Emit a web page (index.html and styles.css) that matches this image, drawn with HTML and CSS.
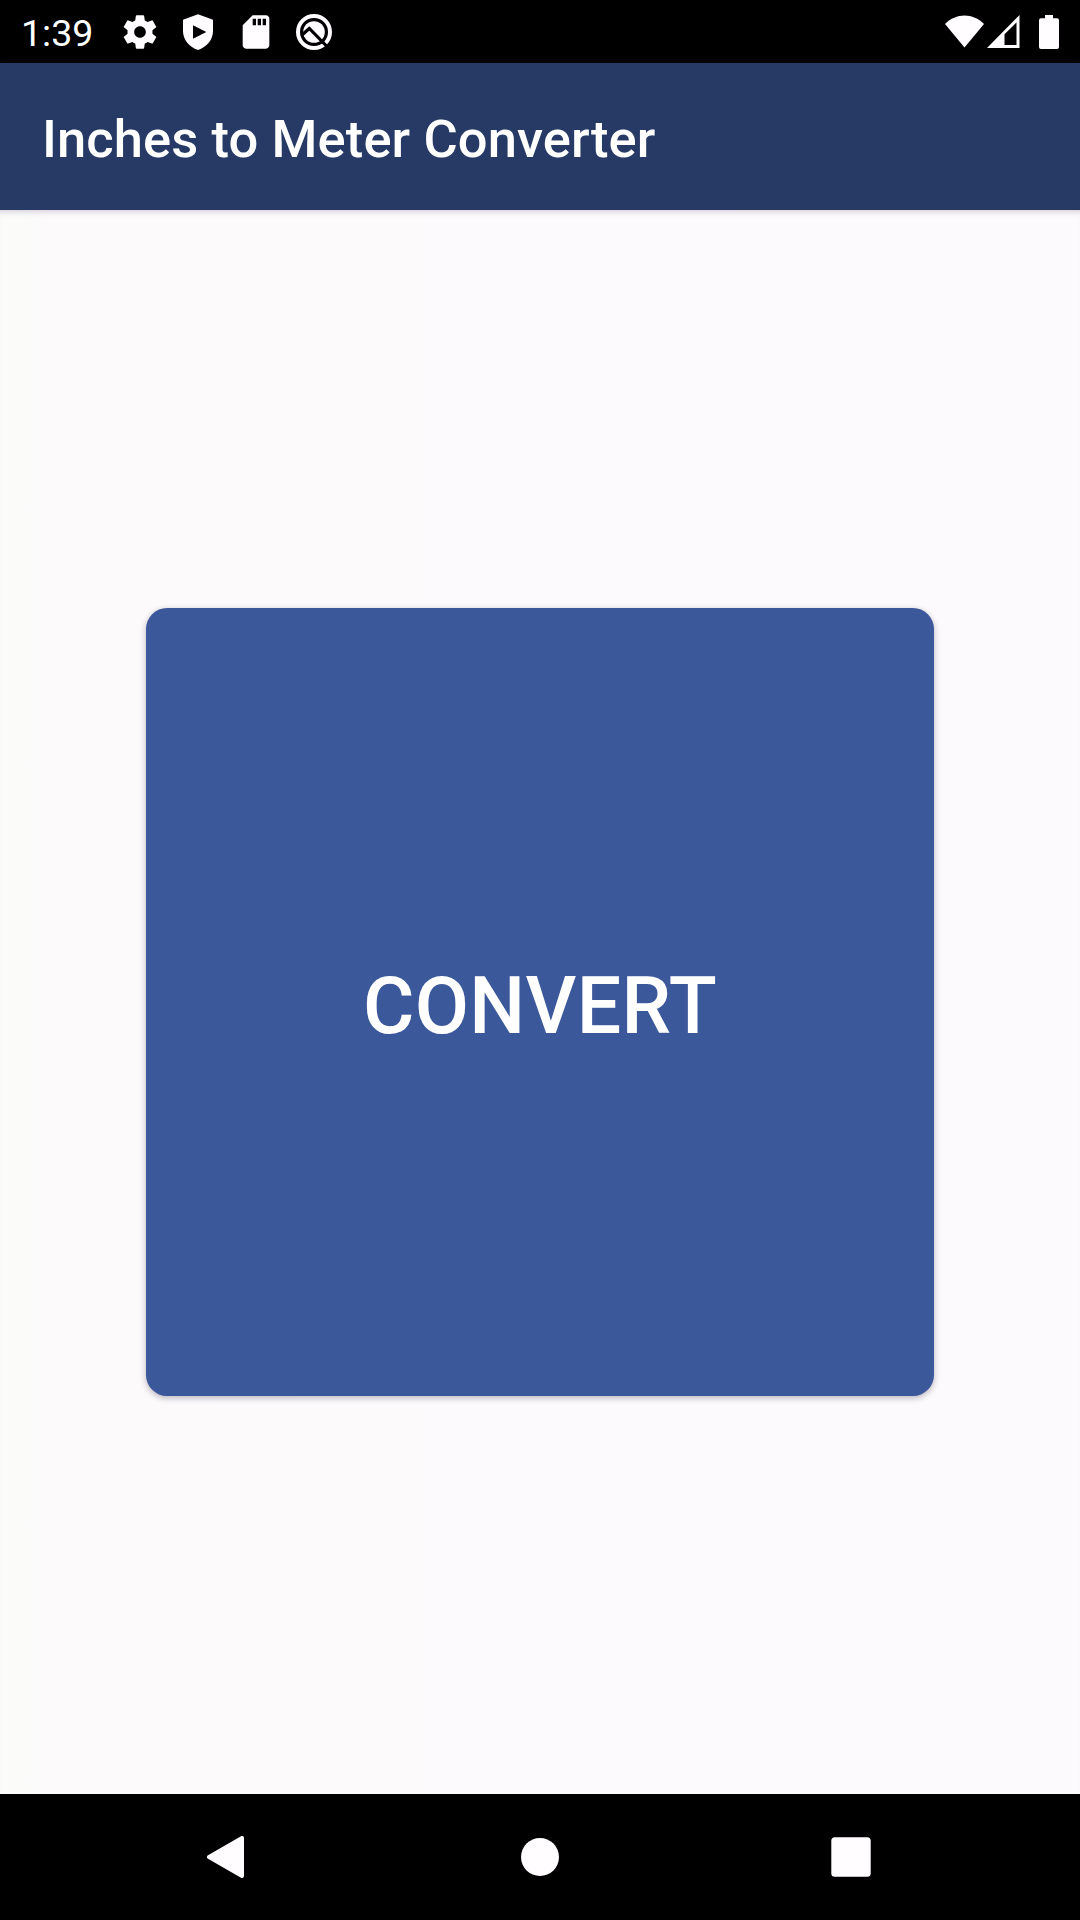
FILE: index.html
```html
<!DOCTYPE html>
<html lang="en">
<head>
<meta charset="utf-8">
<title>Inches to Meter Converter</title>
<link rel="stylesheet" href="styles.css">
</head>
<body>
<div class="status-bar">
  <span class="clock">1:39</span>
  <div class="notifications">
    <svg class="icon" viewBox="0 0 24 24"><path d="M19.43 12.98c.04-.32.07-.64.07-.98s-.03-.66-.07-.98l2.11-1.65c.19-.15.24-.42.12-.64l-2-3.46c-.12-.22-.39-.3-.61-.22l-2.49 1c-.52-.4-1.08-.73-1.69-.98l-.38-2.65C14.460 2.180 14.250 2 14 2h-4c-.25 0-.46.18-.49.42l-.38 2.65c-.61.25-1.170.59-1.690.98l-2.490-1c-.23-.09-.49 0-.61.22l-2 3.460c-.13.22-.07.49.12.640l2.110 1.650c-.04.320-.07.650-.07.980s.03.660.07.980l-2.110 1.650c-.19.150-.24.420-.12.640l2 3.460c.12.220.39.300.61.220l2.490-1c.52.400 1.080.730 1.690.980l.38 2.650c.03.240.24.420.49.420h4c.25 0 .46-.18.490-.42l.38-2.650c.61-.25 1.170-.59 1.690-.98l2.490 1c.23.090.49 0 .61-.22l2-3.460c.12-.22.07-.49-.12-.64l-2.110-1.650zM12 15.500c-1.930 0-3.500-1.570-3.500-3.500s1.570-3.500 3.500-3.500 3.500 1.570 3.500 3.500-1.570 3.500-3.500 3.500z"/></svg>
    <svg class="icon" viewBox="0 0 24 24"><path fill-rule="evenodd" d="M12 1.300 3 4.700v6.800c0 5 3.800 9.600 9 11.300 5.200-1.700 9-6.300 9-11.300V4.700zM9 8v8l8-4z"/></svg>
    <svg class="icon" viewBox="0 0 24 24"><path d="M18 2h-8L4.020 8 4 20c0 1.100.9 2 2 2h12c1.100 0 2-.9 2-2V4c0-1.100-.9-2-2-2zm-6 6h-2V4h2v4zm3 0h-2V4h2v4zm3 0h-2V4h2v4z"/></svg>
    <svg class="icon" viewBox="0 0 40 40"><circle class="ring" cx="20" cy="20" r="16"/><circle cx="20" cy="20" r="10.800"/><path class="cut" d="M8.500 22.500 15.300 16.500 34 35.500"/></svg>
  </div>
  <div class="system">
    <svg class="wifi" viewBox="0 0 40 34"><path d="M0 9C11-2.500 28-2.500 39 9L19.500 32.500z"/></svg>
    <svg class="signal" viewBox="0 0 33 34"><path fill-rule="evenodd" d="M0 33 32.500 0v33zM17.500 19.300V30H29.500V7.600z"/></svg>
    <svg class="battery" viewBox="0 0 20 34"><path d="M6 0h8v3.300h4a2 2 0 0 1 2 2V32a2 2 0 0 1-2 2H2a2 2 0 0 1-2-2V5.300a2 2 0 0 1 2-2h4z"/></svg>
  </div>
</div>
<header class="app-bar"><h1 class="title">Inches to Meter Converter</h1></header>
<main class="content"><button class="convert" type="button">CONVERT</button></main>
<nav class="nav-bar">
  <svg class="nav-icon" viewBox="0 0 42 42"><path class="back" d="M2 21 35 2v38z"/></svg>
  <svg class="nav-icon" viewBox="0 0 42 42"><circle cx="21" cy="21" r="19"/></svg>
  <svg class="nav-icon" viewBox="0 0 42 42"><rect x="0.300" y="1.300" width="39.400" height="39.400" rx="3.500"/></svg>
</nav>
</body>
</html>
```
FILE: styles.css
```css
* {
  box-sizing: border-box;
}

body {
  margin: 0;
  width: 1080px;
  height: 1920px;
  display: flex;
  flex-direction: column;
  overflow: hidden;
  font-family: Roboto, sans-serif;
  background: #fcfafc;
  color: #fff;
}

svg {
  display: block;
  fill: #fffdff;
}

.status-bar {
  height: 63px;
  flex: none;
  display: flex;
  align-items: center;
  padding: 0 21px 0 21px;
  background: #000;
}

.clock {
  width: 99px;
  font-size: 37.5px;
  line-height: 43px;
  padding-top: 4px;
}

.notifications {
  display: flex;
  gap: 18px;
}

.icon {
  width: 40px;
  height: 40px;
}

.ring {
  fill: none;
  stroke: #fffdff;
  stroke-width: 4;
}

.cut {
  fill: none;
  stroke: #000;
  stroke-width: 3.2;
}

.system {
  display: flex;
  align-items: center;
  margin-left: auto;
}

.wifi {
  width: 40px;
  height: 34px;
  margin-right: 2px;
}

.signal {
  width: 33px;
  height: 34px;
  margin-right: 19px;
}

.battery {
  width: 20px;
  height: 34px;
}

.app-bar {
  height: 147px;
  flex: none;
  display: flex;
  align-items: center;
  padding: 0 42px;
  background: #263a65;
  box-shadow: 0 1px 8px rgba(60, 45, 90, 0.25);
}

.title {
  margin: 0;
  padding-top: 5px;
  font-size: 52.5px;
  line-height: 62px;
  font-weight: 500;
  letter-spacing: 0.1px;
}

.content {
  flex: 1;
  display: flex;
  align-items: center;
  justify-content: center;
  background: linear-gradient(90deg, #fbfcfa 0, #fcfafb 50px, #fcfafc 100%);
  box-shadow: inset 0 6px 6px -5px rgba(60, 45, 90, 0.25);
}

.convert {
  width: 788px;
  height: 788px;
  padding: 7px 0 0;
  border: 0;
  border-radius: 21px;
  background: #3b589b;
  color: #fff;
  font: 500 78.75px/92px Roboto, sans-serif;
  letter-spacing: 0.3px;
  box-shadow: 0 2px 6px rgba(30, 20, 50, 0.3);
}

.nav-bar {
  height: 126px;
  flex: none;
  display: flex;
  align-items: center;
  justify-content: center;
  gap: 270px;
  background: #000;
}

.nav-icon {
  width: 42px;
  height: 42px;
  flex: none;
}

.back {
  stroke: #fffdff;
  stroke-width: 4;
  stroke-linejoin: round;
}
```
